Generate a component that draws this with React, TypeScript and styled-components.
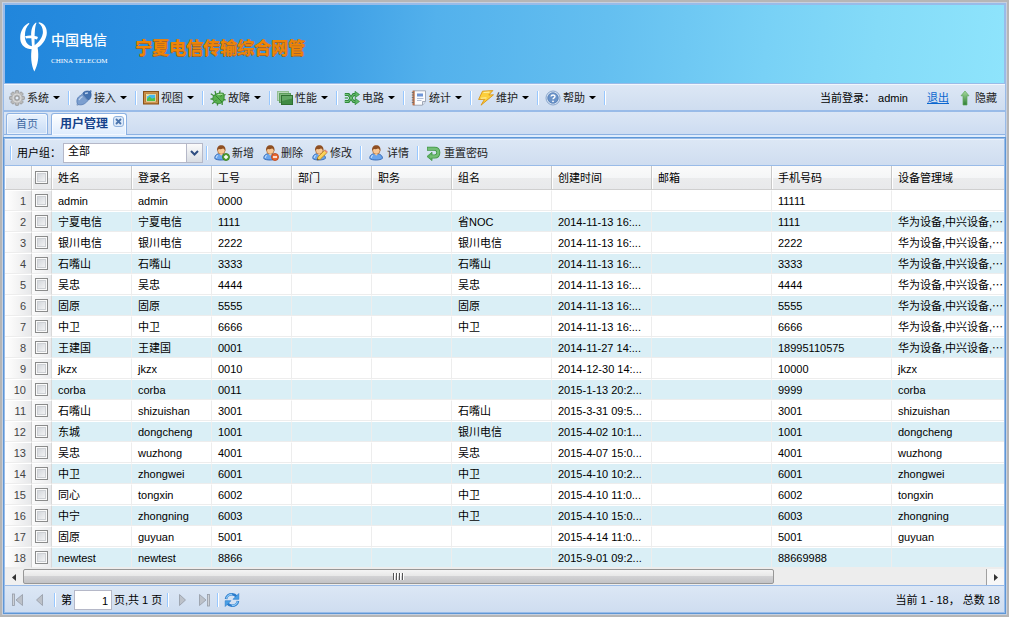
import React from "react";
import styled, { createGlobalStyle } from "styled-components";

const GlobalStyle = createGlobalStyle`
  * { box-sizing: border-box; }
  body {
    margin: 0;
    background: #dfe8f6;
    font: 11px/14px "Liberation Sans", Arial, "Noto Sans CJK SC", sans-serif;
    color: #000;
  }
  button, input, select { font: inherit; color: inherit; }
`;

/* ---------- frame ---------- */

const Window = styled.div`
  min-height: 100vh;
  display: flex;
  flex-direction: column;
  border: 2px solid #b6b6b6;
`;

const Viewport = styled.div`
  flex: 1;
  display: flex;
  flex-direction: column;
  border: 1px solid #c6d0e0;
  background: #99bbe8;
`;

const Banner = styled.header`
  margin: 2px 2px 1px;
  height: 78px;
  padding: 6px 15px 0;
  display: flex;
  align-items: center;
  background: linear-gradient(95deg, #2186dc 0%, #2c91e1 20%, #3d9ee5 32%, #53b1ec 43%, #64bff0 60%, #78d1f6 76%, #84dbf8 87%, #8ee4fc 100%);
`;

const Brand = styled.div`
  display: flex;
  align-items: center;
  gap: 4px;
  width: 115px;
  color: #fff;
`;

const BrandText = styled.div`
  display: flex;
  flex-direction: column;
  gap: 6px;
`;

const BrandName = styled.span`
  font: 500 14px/22px "Noto Sans CJK SC", sans-serif;
`;

const BrandLatin = styled.span`
  font: 7px/10px "Liberation Serif", serif;
  white-space: nowrap;
`;

const Title = styled.h1`
  margin: 0;
  font: bold 17px/32px "Noto Sans CJK SC", sans-serif;
  color: #ee8505;
  text-shadow: 1px 0 0 #a8662a, 0 1px 0 #a8662a;
  white-space: nowrap;
`;

/* ---------- bars ---------- */

const Bar = styled.div`
  display: flex;
  align-items: center;
  background: linear-gradient(#dce7f5, #cfddf0);
`;

const MenuBar = styled(Bar)`
  margin: 0 1px;
  height: 28px;
  padding: 0 8px 0 5px;
  border-top: 1px solid #f2f6fc;
  border-bottom: 2px solid #99bbe8;
`;

const ToolBar = styled(Bar)`
  height: 27px;
  padding: 1px 5px 0;
  border-top: 1px solid #edf3fb;
  border-bottom: 1px solid #99bbe8;
`;

const PagingBar = styled(Bar)`
  height: 27px;
  padding: 2px 4px 0 5px;
  border-top: 1px solid #99bbe8;
`;

const Separator = styled.span<{ $before?: number; $after?: number }>`
  flex: none;
  width: 2px;
  height: 14px;
  margin-left: ${(p) => p.$before ?? 8}px;
  margin-right: ${(p) => p.$after ?? 6}px;
  border-left: 1px solid #98c8ff;
  border-right: 1px solid #fff;
`;

const ToolButton = styled.button`
  flex: none;
  display: flex;
  align-items: center;
  gap: 2px;
  padding: 0;
  border: 0;
  background: none;
  color: #222;
  white-space: nowrap;
  cursor: pointer;
`;

const Caret = styled.span`
  margin-left: 2px;
  border: 3px solid transparent;
  border-top-color: #000;
  border-bottom: 0;
  width: 7px;
`;

const ButtonGroup = styled.div`
  display: flex;
  gap: 9px;
`;

const Spacer = styled.span`
  flex: 1;
`;

const Session = styled.div`
  display: flex;
  align-items: center;
  white-space: nowrap;
`;

const LogoutLink = styled.a`
  margin: 0 8px 0 19px;
  color: #0b67cf;
`;

/* ---------- tabs ---------- */

const TabStrip = styled.div`
  margin: 0 1px;
  height: 23px;
  padding: 1px 2px 0;
  display: flex;
  gap: 3px;
  background: linear-gradient(#dbe6f5, #cddcf1);
  border-bottom: 1px solid #8db2e3;
`;

const TabBody = styled.div`
  margin: 0 1px;
  height: 2px;
  background: #deecfd;
`;

const Tab = styled.div<{ $active?: boolean }>`
  display: flex;
  align-items: flex-start;
  height: ${(p) => (p.$active ? 22 : 21)}px;
  padding: ${(p) => (p.$active ? "2px 2px 0 8px" : "2px 9px 0")};
  border: 1px solid #8db2e3;
  border-bottom: 0;
  border-radius: 3px 3px 0 0;
  background: ${(p) => (p.$active ? "linear-gradient(#fff, #deecfd)" : "linear-gradient(#e9f2fd, #c8dcf5)")};
  box-shadow: inset 0 0 0 1px rgba(255, 255, 255, 0.6);
`;

const TabLabel = styled.button<{ $active?: boolean }>`
  padding: 0;
  border: 0;
  background: none;
  cursor: pointer;
  line-height: 16px;
  font-size: ${(p) => (p.$active ? 12 : 11)}px;
  font-weight: ${(p) => (p.$active ? "bold" : "normal")};
  color: ${(p) => (p.$active ? "#15428b" : "#416aa3")};
`;

const TabClose = styled.button`
  width: 11px;
  height: 11px;
  margin-left: 5px;
  padding: 0;
  border: 0;
  background: none;
  display: flex;
  cursor: pointer;
`;

/* ---------- user group box ---------- */

const GroupLabel = styled.label`
  width: 46px;
  white-space: nowrap;
`;

const Combo = styled.div`
  display: flex;
  position: relative;
  width: 140px;
  height: 20px;
`;

const ComboSelect = styled.select`
  appearance: none;
  width: 100%;
  height: 20px;
  padding: 0 20px 4px 4px;
  border: 1px solid #b5b8c8;
  border-radius: 0;
  background: #fff;
  line-height: 14px;
`;

const ComboTrigger = styled.span`
  position: absolute;
  right: 0;
  top: 0;
  width: 17px;
  height: 20px;
  display: grid;
  place-items: center;
  border: 1px solid #b5b8c8;
  background: linear-gradient(#fbfbfb, #d9dde3);
  pointer-events: none;
`;

/* ---------- grid ---------- */

const Panel = styled.main`
  flex: 1;
  display: flex;
  flex-direction: column;
  border: 1px solid #5e97d6;
  padding: 1px;
  background: #99bbe8;
`;

const GridScroller = styled.div`
  flex: 1;
  width: 0;
  min-width: 100%;
  overflow: hidden;
  background: #fff;
`;

const Table = styled.table`
  width: 100%;
  min-width: 1007px;
  table-layout: fixed;
  border-collapse: separate;
  border-spacing: 0;
`;

const HeadCell = styled.th`
  height: 24px;
  padding: 0 6px;
  text-align: left;
  font-weight: normal;
  white-space: nowrap;
  background: linear-gradient(#fbfbfb 0%, #f5f6f7 50%, #ebeced 51%, #e8e9eb 100%);
  border-right: 1px solid #c8c8c8;
  border-bottom: 1px solid #cfcfcf;
  box-shadow: inset 1px 0 0 #fff;
`;

const HeadCheckCell = styled(HeadCell)`
  padding: 0;
`;

const Row = styled.tr<{ $striped: boolean }>`
  background: ${(p) => (p.$striped ? "#daeff6" : "#fff")};
`;

const Cell = styled.td`
  height: 21px;
  padding: 1px 6px 0;
  overflow: hidden;
  white-space: nowrap;
  text-overflow: clip;
  border-top: 1px solid #fff;
  border-bottom: 1px solid #ededed;
  border-right: 1px solid #ededed;
`;

const NumberCell = styled(Cell)`
  padding: 1px 5px 0 2px;
  text-align: right;
  color: #444;
  border-right-color: #cfcfcf;
  background: linear-gradient(90deg, #fff 0%, #f7f7f7 35%, #e7e8ea 100%);
`;

const CheckCell = styled(Cell)`
  padding: 0;
  border-right-color: #d9d9d9;
  background: linear-gradient(90deg, #fbfbfb, #eaebed);
`;

const CheckBox = styled.input`
  appearance: none;
  display: block;
  width: 13px;
  height: 13px;
  margin: 0 auto;
  border: 1px solid #8a8b8b;
  background: linear-gradient(135deg, #cbcfd5, #fafafa);
  box-shadow: inset 0 0 0 1px #fafafa, inset 0 0 0 2px #cdd0d4;
`;

/* ---------- horizontal scrollbar ---------- */

const ScrollBar = styled.div`
  display: flex;
  height: 17px;
  padding-top: 1px;
  background: #ededed;
`;

const ScrollButton = styled.button<{ $end?: boolean }>`
  width: 18px;
  padding: 0;
  display: grid;
  place-items: center;
  border: 0;
  border-left: ${(p) => (p.$end ? "1px solid #a0a0a0" : "0")};
  background: ${(p) => (p.$end ? "#f7f7f7" : "#f0f0f0")};
`;

const ScrollTrack = styled.div`
  flex: 1;
`;

const ScrollThumb = styled.div`
  width: 78%;
  height: 15px;
  display: flex;
  justify-content: center;
  align-items: center;
  gap: 1px;
  border: 1px solid #979797;
  border-radius: 2px;
  background: linear-gradient(#f4f4f4 0%, #e8e8e8 45%, #d2d2d4 50%, #c2c2c5 100%);
`;

const Grip = styled.i`
  width: 2px;
  height: 7px;
  border-left: 1px solid #555;
  border-right: 1px solid #fff;
`;

/* ---------- paging ---------- */

const PageButtons = styled.div`
  display: flex;
  gap: 6px;
`;

const PageLabel = styled.label`
  display: flex;
  align-items: center;
  gap: 2px;
  white-space: nowrap;
`;

const PageInput = styled.input`
  width: 38px;
  height: 20px;
  padding: 1px 3px 0;
  text-align: right;
  border: 1px solid #b5b8c8;
  background: #fff;
`;

/* ---------- icons ---------- */

type IconProps = { children: React.ReactNode; size?: number };
const Icon = ({ children, size = 16 }: IconProps) => (
  <svg width={size} height={size} viewBox={`0 0 ${size} ${size}`} fill="none" aria-hidden="true">
    {children}
  </svg>
);

const GearIcon = () => (
  <Icon>
    {[0, 45, 90, 135].map((a) => (
      <rect key={a} x="6.3" y="0.6" width="3.4" height="14.8" rx="0.8" fill="#b9b9b9" stroke="#8d8d8d" strokeWidth="0.7" transform={`rotate(${a} 8 8)`} />
    ))}
    <circle cx="8" cy="8" r="5.4" fill="#bdbdbd" />
    <circle cx="8" cy="8" r="4" stroke="#dadada" strokeWidth="1" />
    <circle cx="8" cy="8" r="2.1" fill="#e4ecf7" stroke="#8a8a8a" strokeWidth="0.9" />
  </Icon>
);

const PlugIcon = () => (
  <Icon>
    <path d="M.8 15.5L4 12" stroke="#9fb3cf" strokeWidth="2" />
    <path d="M12.5 4L15.2 .5" stroke="#6f93c4" strokeWidth="2" />
    <path d="M1.500 14.2C0 10.500 1.400 7 4.500 5.500L6 4.400 12 10.600 10.500 12C8 14.800 4.500 15.600 1.500 14.200Z" fill="#7c9fcf" stroke="#4a73ad" strokeWidth=".7" />
    <path d="M6.600 4L7.500 2.300C9.800 .6 12.800 .8 14.500 1.800 15.900 5 15 8 13 9.800L11.900 9.700Z" fill="#4472b0" stroke="#2f5c9c" strokeWidth=".7" />
    <path d="M3 10C3.800 8.300 5 7.300 6.500 6.500M9 3.500L12 2.800" stroke="#c0d4ee" strokeWidth="1.300" />
  </Icon>
);

const ViewIcon = () => (
  <Icon>
    <rect x="0.5" y="1.500" width="15" height="12.500" fill="#b3752f" stroke="#8a5218" />
    <rect x="1.800" y="2.800" width="12.400" height="9.900" stroke="#dca45e" strokeWidth=".8" />
    <rect x="3.500" y="4.300" width="9" height="7" fill="#43b8ef" stroke="#f7e6b0" strokeWidth=".8" />
    <path d="M4 10.900V9L6.500 6.600 9 8.800 12.100 7.600V10.900Z" fill="#4fc04a" />
    <path d="M4 6.500L7 4.800H4Z" fill="#f7f08a" />
  </Icon>
);

const BugIcon = () => (
  <Icon>
    <path d="M5 1L6 5M10 .5L9.500 4M.8 3.800L5 6.500M.5 9H4.500M2.200 13.800L5.500 11M7.300 15.500L8 12M12.200 15V11M15.600 10L12 9M15.600 4.500L12 6" stroke="#3f8f3a" strokeWidth="1.300" />
    <path d="M3.600 5.800C6 3.200 9.900 2.600 13.400 3.200 15 6.800 14.300 11.300 10.900 13.200 7.500 14.300 3.900 12.900 3 9.700 2.700 8.200 2.900 6.700 3.600 5.800Z" fill="#57b04e" stroke="#2f7d2c" strokeWidth=".8" />
    <path d="M5.500 5.500L12 12M6.500 9.800L5.500 11M10.500 6.500L12 5.300" stroke="#2f7d2c" strokeWidth=".9" />
    <path d="M7.500 4.800C9.200 4.100 10.900 4.100 12.400 4.400" stroke="#b4e6a8" strokeWidth="1.100" />
  </Icon>
);

const StackIcon = () => (
  <Icon>
    <rect x="0.5" y="1.500" width="11" height="9" fill="#b9d6ba" stroke="#93bf93" />
    <rect x="2.500" y="3.500" width="11" height="9" fill="#7fb67e" stroke="#5e9f5d" />
    <rect x="4.500" y="5.500" width="11" height="9" fill="#3f8a43" stroke="#2f7031" />
    <path d="M5 6H15V8.500L5 11Z" fill="#62a664" />
  </Icon>
);

const CircuitIcon = () => (
  <Icon>
    <path d="M.8 4.500H4.500L9.500 11.500H12" stroke="#2f8a3b" strokeWidth="2.800" />
    <path d="M.8 11.500H4.500L9.500 4.500H12" stroke="#2f8a3b" strokeWidth="2.800" />
    <path d="M.8 4.500H4.500L9.500 11.500H12M.8 11.500H4.500L9.500 4.500H12" stroke="#76c37b" strokeWidth="1" />
    <path d="M11 1.300L15.500 4.500 11 7.700ZM11 8.300L15.500 11.500 11 14.700Z" fill="#5db565" stroke="#2f8a3b" strokeWidth=".7" />
    <path d="M.8 8H4" stroke="#4ba355" strokeWidth="1.400" />
  </Icon>
);

const ReportIcon = () => (
  <Icon>
    <path d="M2.500 .8H14.500V11.500L11.500 15.200H2.500Z" fill="#fbfcfe" stroke="#8f98a8" strokeWidth=".8" />
    <path d="M11.500 15V11.500H14.500" fill="#dbe2ee" stroke="#8f98a8" strokeWidth=".8" />
    <rect x="1.500" y=".7" width="2.200" height="14.600" fill="#b9714a" />
    <path d="M.8 2.500H3M.8 5H3M.8 7.500H3M.8 10H3M.8 12.500H3" stroke="#6f6f6f" strokeWidth=".9" />
    <rect x="6" y="3.500" width="6" height="3" fill="#6f95d6" />
    <path d="M6 8.500H12.500M6 10.500H10.500" stroke="#a8b6cf" strokeWidth=".9" />
  </Icon>
);

const BoltIcon = () => (
  <Icon>
    <path d="M4.500 1.200L14.800 .6 10.800 5 15.500 4.800 3 15.200 6.500 9.300 .6 9.500Z" fill="#fccf3d" stroke="#d99414" strokeWidth=".9" strokeLinejoin="round" />
    <path d="M5.500 2.500L11.500 2.100M2.800 8.300L8.500 7.900" stroke="#fff0a0" strokeWidth="1.100" />
  </Icon>
);

const HelpIcon = () => (
  <Icon>
    <circle cx="8" cy="8" r="7" fill="#dbe7f5" stroke="#87a5cc" />
    <circle cx="8" cy="8" r="5.300" fill="#6a93c8" stroke="#4a76b0" strokeWidth=".7" />
    <path d="M6 6.500C6.200 4.500 10 4.400 10 6.500 10 7.800 8 7.900 8 9.300" stroke="#fff" strokeWidth="1.400" />
    <circle cx="8" cy="11.300" r=".9" fill="#fff" />
  </Icon>
);

const UpIcon = () => (
  <Icon>
    <path d="M8 1L12 5.800H10V15H6V5.800H4Z" fill="url(#up)" stroke="#5da75b" strokeWidth=".7" />
    <defs>
      <linearGradient id="up" x1="0" y1="0" x2="0" y2="1">
        <stop stopColor="#a7dba0" />
        <stop offset="1" stopColor="#2f7f34" />
      </linearGradient>
    </defs>
  </Icon>
);

type Badge = "add" | "remove" | "edit";
const UserIcon = ({ badge }: { badge?: Badge }) => (
  <Icon>
    <path d="M.8 13.500C.6 10.300 3 8.500 6.800 8.500S13.400 10.300 13.500 13.300C11.300 15.500 3 15.600 .8 13.500Z" fill="#6aa5ec" stroke="#2d62b0" strokeWidth=".9" />
    <path d="M3.800 10.300C2.700 11.100 2.200 12.200 2.200 13" stroke="#b9d8fb" strokeWidth="1.200" />
    <circle cx="7.300" cy="5.500" r="3.700" fill="#f7c795" stroke="#a8672f" strokeWidth=".7" />
    <path d="M3.200 6C2.600 2.100 4.600 .3 7.300 .3S12 2.100 11.400 6C10.800 4.700 10.200 4 9 3.600 7.500 4.400 5.500 4.200 4.500 4.100 3.900 4.700 3.700 5.200 3.200 6Z" fill="#8f4f22" />
    <path d="M5.500 8.800L7.200 10.800 9 8.800" fill="#f7c795" />
    {badge === "add" && (
      <>
        <circle cx="12" cy="12" r="3.500" fill="#5aa637" stroke="#2f7518" strokeWidth=".8" />
        <path d="M12 10V14M10 12H14" stroke="#fff" strokeWidth="1.400" />
      </>
    )}
    {badge === "remove" && (
      <>
        <circle cx="12" cy="12" r="3.500" fill="#ea6a33" stroke="#b53d10" strokeWidth=".8" />
        <path d="M10 12H14" stroke="#fff" strokeWidth="1.500" />
      </>
    )}
    {badge === "edit" && (
      <>
        <path d="M5 15L6 11.800 12.800 5.200 15.200 7.400 8.300 14.200Z" fill="#fbd25a" stroke="#b98016" strokeWidth=".8" />
        <path d="M12.800 5.200L15.200 7.400" stroke="#e58a78" strokeWidth="1.600" />
        <path d="M5 15L5.500 13.300 6.800 14.500Z" fill="#444" />
      </>
    )}
  </Icon>
);

const ResetIcon = () => (
  <Icon>
    <path d="M1 3.800H8.500C11 3.800 12.300 5.200 12.300 7.500S11 11.500 8.500 11.500H5" stroke="#3f9444" strokeWidth="4" />
    <path d="M6 7.200V15.600L1 11.500Z" fill="#5cb25f" stroke="#3f9444" strokeWidth=".8" />
    <path d="M1.500 3.800H8.500C11 3.800 12.300 5.200 12.300 7.500S11 11.500 8.500 11.500H4" stroke="#74be75" strokeWidth="2.400" />
  </Icon>
);

const PageIcon = ({ forward, edge }: { forward?: boolean; edge?: boolean }) => (
  <Icon>
    <g transform={forward ? "rotate(180 8 8)" : undefined}>
      {edge && <rect x="2.500" y="2" width="2" height="11.500" fill="#cdd1d7" stroke="#949ba6" strokeWidth=".8" />}
      <path d={edge ? "M12.500 2.500V13.500L6 8Z" : "M10.500 2.500V13.500L4.500 8Z"} fill="#bcc1c9" stroke="#949ba6" strokeWidth=".8" />
    </g>
  </Icon>
);

const RefreshIcon = () => (
  <Icon>
    <path d="M2 7C2.600 3.600 5.400 2 8.200 2.200 10 2.300 11.500 3.200 12.400 4.500" stroke="#2a7bcb" strokeWidth="2.600" />
    <path d="M14.800 1.500V7.300H9Z" fill="#48a0e6" stroke="#2a7bcb" strokeWidth=".6" />
    <path d="M14 9C13.400 12.400 10.600 14 7.800 13.800 6 13.700 4.500 12.800 3.600 11.500" stroke="#2a7bcb" strokeWidth="2.600" />
    <path d="M1.200 14.500V8.700H7Z" fill="#48a0e6" stroke="#2a7bcb" strokeWidth=".6" />
    <path d="M2.400 6.500C3.200 4 5.500 2.200 8.200 2.400M13.600 9.500C12.800 12 10.500 13.700 7.800 13.600" stroke="#8fcbf7" strokeWidth="1.100" />
  </Icon>
);

const TelecomMark = () => (
  <svg width="27" height="50" viewBox="0 0 27 50" fill="#fff" aria-hidden="true">
    <path d="M8.500 1C3 4 -.3 10 .3 17.500 1 23.500 5.500 27 12 27.300L12.500 24.300C8.500 23.800 5.600 21 5 16 4.600 10.500 5.500 5.500 9.500 1.600Z" />
    <path d="M19 .3C25 1.500 27.800 7 26.500 13.500 24.800 20.500 19.500 25.800 13.500 27.500L12.300 24.500C17.500 22 21.500 17.500 22.800 11.500 23.300 7.500 22 3.200 18.500 1Z" />
    <path d="M16 .5C12 3.500 11 8 11.200 14L12 25C10.300 34 11.200 43 14.300 49.500 18 43 19.300 34.500 17.500 25L14.800 26C14.300 18 14.600 12 15 7.500 15.300 4.500 15.800 2.500 16.500 1Z" />
    <path d="M5 14.300C9 13 14 13.300 18 15L17 17.500C13 16 9 15.800 6 16.600Z" />
  </svg>
);

/* ---------- data ---------- */

const menus = [
  { label: "系统", icon: <GearIcon /> },
  { label: "接入", icon: <PlugIcon /> },
  { label: "视图", icon: <ViewIcon /> },
  { label: "故障", icon: <BugIcon /> },
  { label: "性能", icon: <StackIcon /> },
  { label: "电路", icon: <CircuitIcon /> },
  { label: "统计", icon: <ReportIcon /> },
  { label: "维护", icon: <BoltIcon /> },
  { label: "帮助", icon: <HelpIcon /> },
];

const columns = [
  { title: "姓名", width: 80 },
  { title: "登录名", width: 80 },
  { title: "工号", width: 80 },
  { title: "部门", width: 80 },
  { title: "职务", width: 80 },
  { title: "组名", width: 100 },
  { title: "创建时间", width: 100 },
  { title: "邮箱", width: 120 },
  { title: "手机号码", width: 120 },
  { title: "设备管理域" },
];

const allDevices = "华为设备,中兴设备,⋯";

// name, login, staff number, group, created, phone, device domain
const users: string[][] = [
  ["admin", "admin", "0000", "", "", "11111", ""],
  ["宁夏电信", "宁夏电信", "1111", "省NOC", "2014-11-13 16:...", "1111", allDevices],
  ["银川电信", "银川电信", "2222", "银川电信", "2014-11-13 16:...", "2222", allDevices],
  ["石嘴山", "石嘴山", "3333", "石嘴山", "2014-11-13 16:...", "3333", allDevices],
  ["吴忠", "吴忠", "4444", "吴忠", "2014-11-13 16:...", "4444", allDevices],
  ["固原", "固原", "5555", "固原", "2014-11-13 16:...", "5555", allDevices],
  ["中卫", "中卫", "6666", "中卫", "2014-11-13 16:...", "6666", allDevices],
  ["王建国", "王建国", "0001", "", "2014-11-27 14:...", "18995110575", allDevices],
  ["jkzx", "jkzx", "0010", "", "2014-12-30 14:...", "10000", "jkzx"],
  ["corba", "corba", "0011", "", "2015-1-13 20:2...", "9999", "corba"],
  ["石嘴山", "shizuishan", "3001", "石嘴山", "2015-3-31 09:5...", "3001", "shizuishan"],
  ["东城", "dongcheng", "1001", "银川电信", "2015-4-02 10:1...", "1001", "dongcheng"],
  ["吴忠", "wuzhong", "4001", "吴忠", "2015-4-07 15:0...", "4001", "wuzhong"],
  ["中卫", "zhongwei", "6001", "中卫", "2015-4-10 10:2...", "6001", "zhongwei"],
  ["同心", "tongxin", "6002", "中卫", "2015-4-10 11:0...", "6002", "tongxin"],
  ["中宁", "zhongning", "6003", "中卫", "2015-4-10 15:0...", "6003", "zhongning"],
  ["固原", "guyuan", "5001", "", "2015-4-14 11:0...", "5001", "guyuan"],
  ["newtest", "newtest", "8866", "", "2015-9-01 09:2...", "88669988", ""],
];

/* ---------- page ---------- */

const UserGrid = () => (
  <GridScroller>
    <Table>
      <colgroup>
        <col width={27} />
        <col width={20} />
        {columns.map((c) => (
          <col key={c.title} width={c.width} />
        ))}
      </colgroup>
      <thead>
        <tr>
          <HeadCell />
          <HeadCheckCell>
            <CheckBox type="checkbox" aria-label="全选" />
          </HeadCheckCell>
          {columns.map((c) => (
            <HeadCell key={c.title}>{c.title}</HeadCell>
          ))}
        </tr>
      </thead>
      <tbody>
        {users.map(([name, login, no, group, created, phone, domain], i) => (
          <Row key={no} $striped={i % 2 === 1}>
            <NumberCell>{i + 1}</NumberCell>
            <CheckCell>
              <CheckBox type="checkbox" aria-label={name} />
            </CheckCell>
            <Cell>{name}</Cell>
            <Cell>{login}</Cell>
            <Cell>{no}</Cell>
            <Cell />
            <Cell />
            <Cell>{group}</Cell>
            <Cell>{created}</Cell>
            <Cell />
            <Cell>{phone}</Cell>
            <Cell>{domain}</Cell>
          </Row>
        ))}
      </tbody>
    </Table>
  </GridScroller>
);

export default function App() {
  return (
    <Window>
      <GlobalStyle />
      <Viewport>
        <Banner>
          <Brand>
            <TelecomMark />
            <BrandText>
              <BrandName>中国电信</BrandName>
              <BrandLatin>CHINA TELECOM</BrandLatin>
            </BrandText>
          </Brand>
          <Title>宁夏电信传输综合网管</Title>
        </Banner>

        <MenuBar as="nav">
          {menus.map((m) => (
            <React.Fragment key={m.label}>
              <ToolButton type="button">
                {m.icon}
                {m.label}
                <Caret />
              </ToolButton>
              <Separator />
            </React.Fragment>
          ))}
          <Spacer />
          <Session>
            <span>当前登录： admin</span>
            <LogoutLink href="#logout">退出</LogoutLink>
            <ToolButton type="button">
              <UpIcon />
              隐藏
            </ToolButton>
          </Session>
        </MenuBar>

        <TabStrip>
          <Tab>
            <TabLabel type="button">首页</TabLabel>
          </Tab>
          <Tab $active>
            <TabLabel type="button" $active>用户管理</TabLabel>
            <TabClose type="button" aria-label="关闭">
              <Icon size={11}>
                <rect x="0.500" y="0.500" width="10" height="10" rx="2.500" fill="#dce9f9" stroke="#8fb1dc" />
                <path d="M3 3L8 8M8 3L3 8" stroke="#4a74ac" strokeWidth="1.800" />
              </Icon>
            </TabClose>
          </Tab>
        </TabStrip>
        <TabBody />

        <Panel>
          <ToolBar>
            <Separator $before={0} $after={5} />
            <GroupLabel htmlFor="group">用户组：</GroupLabel>
            <Combo>
              <ComboSelect id="group" defaultValue="全部">
                <option>全部</option>
              </ComboSelect>
              <ComboTrigger>
                <svg width="9" height="6" viewBox="0 0 9 6" fill="none" aria-hidden="true">
                  <path d="M1 1L4.500 4.500 8 1" stroke="#2f4d80" strokeWidth="2" />
                </svg>
              </ComboTrigger>
            </Combo>
            <Separator $before={3} />
            <ButtonGroup>
              <ToolButton type="button"><UserIcon badge="add" />新增</ToolButton>
              <ToolButton type="button"><UserIcon badge="remove" />删除</ToolButton>
              <ToolButton type="button"><UserIcon badge="edit" />修改</ToolButton>
            </ButtonGroup>
            <Separator $after={7} />
            <ToolButton type="button"><UserIcon />详情</ToolButton>
            <Separator $after={7} />
            <ToolButton type="button"><ResetIcon />重置密码</ToolButton>
          </ToolBar>

          <UserGrid />

          <ScrollBar>
            <ScrollButton type="button" aria-label="向左">
              <svg width="4" height="7" viewBox="0 0 4 7" aria-hidden="true"><path d="M4 0V7L0 3.500Z" fill="#333" /></svg>
            </ScrollButton>
            <ScrollTrack>
              <ScrollThumb><Grip /><Grip /><Grip /><Grip /></ScrollThumb>
            </ScrollTrack>
            <ScrollButton type="button" aria-label="向右" $end>
              <svg width="4" height="7" viewBox="0 0 4 7" aria-hidden="true"><path d="M0 0V7L4 3.500Z" fill="#333" /></svg>
            </ScrollButton>
          </ScrollBar>

          <PagingBar>
            <PageButtons>
              <ToolButton type="button" aria-label="第一页"><PageIcon edge /></ToolButton>
              <ToolButton type="button" aria-label="上一页"><PageIcon /></ToolButton>
            </PageButtons>
            <Separator $before={6} $after={5} />
            <PageLabel>
              第
              <PageInput defaultValue="1" />
              页,共 1 页
            </PageLabel>
            <Separator $before={5} $after={5} />
            <PageButtons>
              <ToolButton type="button" aria-label="下一页"><PageIcon forward /></ToolButton>
              <ToolButton type="button" aria-label="最后一页"><PageIcon forward edge /></ToolButton>
            </PageButtons>
            <Separator $before={5} $after={5} />
            <ToolButton type="button" aria-label="刷新"><RefreshIcon /></ToolButton>
            <Spacer />
            <span>当前 1 - 18， 总数 18</span>
          </PagingBar>
        </Panel>
      </Viewport>
    </Window>
  );
}
